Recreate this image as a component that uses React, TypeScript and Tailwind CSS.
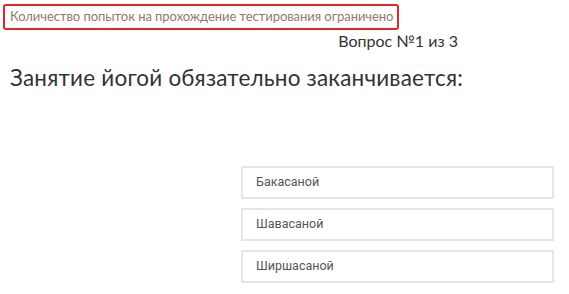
const answers = ['Бакасаной', 'Шавасаной', 'Ширшасаной'];

export default function App() {
  return (
    <div className="w-[569px] h-[294px] bg-white overflow-hidden font-['Lato','Open_Sans',sans-serif]">
      <div className="pt-[3px] pl-[3px]">
        <div className="inline-flex items-center h-[26px] pl-[5px] pr-[4px] border-2 border-[#e32626] rounded-[3px]">
          <span className="text-[13px] tracking-[-0.05px] text-[#8c7c6a] whitespace-nowrap">
            Количество попыток на прохождение тестирования ограничено
          </span>
        </div>
      </div>

      <div className="w-[458px] text-right text-[16px] leading-[20px] text-[#333] mt-[1px]">
        Вопрос №1 из 3
      </div>

      <h2 className="pl-[10px] mt-[14px] text-[22.5px] leading-[26px] text-[#333] tracking-[0.2px]">
        Занятие йогой обязательно заканчивается:
      </h2>

      <div className="flex flex-col items-end gap-[9px] pr-[15px] mt-[75px]">
        {answers.map((a) => (
          <div
            key={a}
            className="w-[313px] h-[33px] flex items-center px-[13px] border-2 border-[#e6e6e6] font-['Roboto',sans-serif] text-[12.5px] text-[#555]"
          >
            {a}
          </div>
        ))}
      </div>
    </div>
  );
}
